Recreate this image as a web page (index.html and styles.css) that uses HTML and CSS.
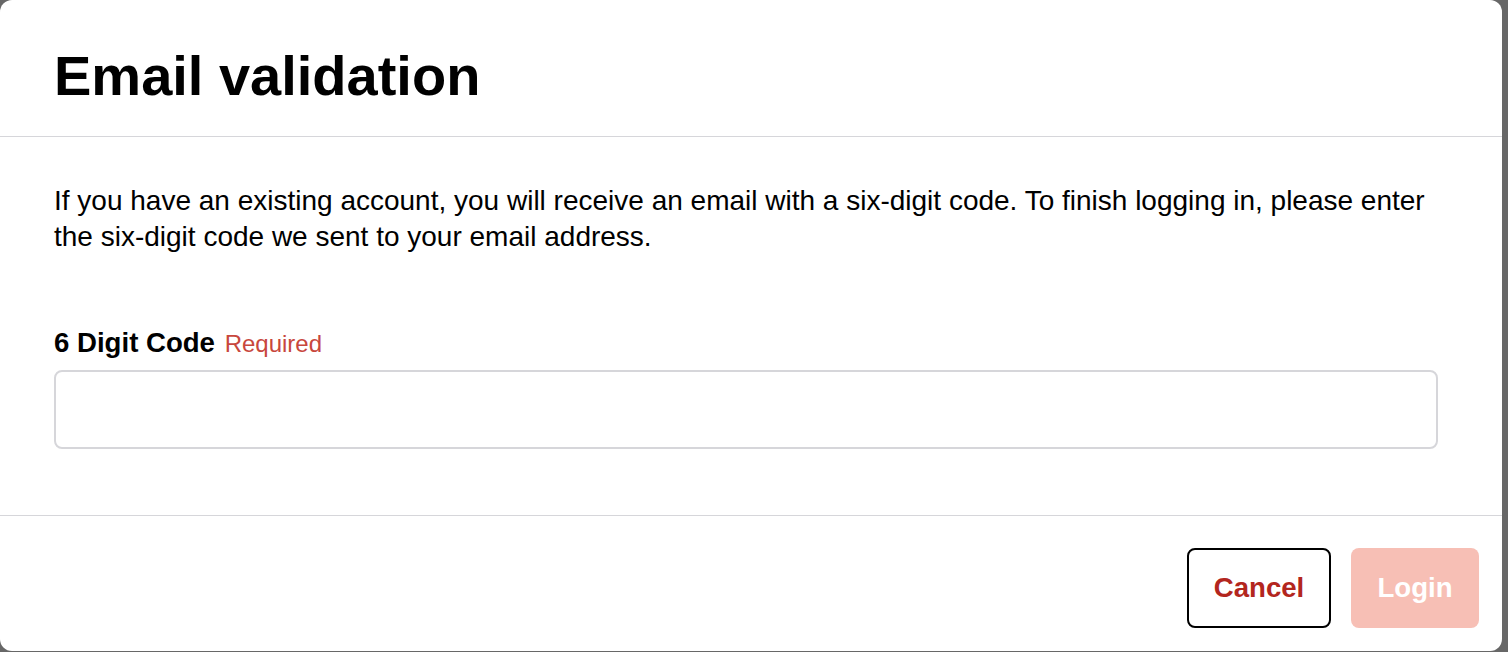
FILE: index.html
```html
<!DOCTYPE html>
<html lang="en">
<head>
<meta charset="utf-8">
<title>Email validation</title>
<link rel="stylesheet" href="styles.css">
</head>
<body>
<div class="modal">
  <header class="modal-header">
    <h1 class="modal-title">Email validation</h1>
  </header>
  <section class="modal-body">
    <p class="intro">If you have an existing account, you will receive an email with a six-digit code. To finish logging in, please enter the six-digit code we sent to your email address.</p>
    <div class="field">
      <label class="field-label" for="code">6 Digit Code <span class="required">Required</span></label>
      <input class="field-input" id="code" type="text">
    </div>
  </section>
  <footer class="modal-footer">
    <button class="btn btn-cancel" type="button">Cancel</button>
    <button class="btn btn-login" type="button" disabled>Login</button>
  </footer>
</div>
</body>
</html>
```

FILE: styles.css
```css
html, body {
  margin: 0;
  padding: 0;
}
body {
  background: #676767;
  font-family: "Liberation Sans", Arial, Helvetica, sans-serif;
  color: #000;
  width: 1508px;
  height: 652px;
  overflow: hidden;
}
.modal {
  width: 1502px;
  height: 651px;
  background: #fff;
  border-radius: 12px;
  display: flex;
  flex-direction: column;
  box-sizing: border-box;
  overflow: hidden;
}
.modal-header {
  padding: 44px 64px 28px 54px;
  border-bottom: 1px solid #d6d6da;
}
.modal-title {
  margin: 0;
  font-size: 56px;
  line-height: 64px;
  font-weight: 700;
}
.modal-body {
  padding: 46px 64px 0 54px;
  flex: 1;
  border-bottom: 1px solid #d6d6da;
}
.intro {
  margin: 0;
  font-size: 28px;
  line-height: 36px;
}
.field {
  margin-top: 72px;
  display: flex;
  flex-direction: column;
  gap: 10px;
}
.field-label {
  font-size: 27.6px;
  line-height: 32px;
  font-weight: 700;
}
.required {
  font-size: 24px;
  font-weight: 400;
  color: #c8473d;
  margin-left: 2px;
}
.field-input {
  box-sizing: border-box;
  width: 1384px;
  height: 79px;
  border: 2px solid #d6d6da;
  border-radius: 8px;
  background: #fff;
  font: inherit;
  font-size: 24px;
  padding: 0 16px;
  outline: none;
}
.modal-footer {
  height: 135px;
  box-sizing: border-box;
  padding: 32px 23px 0 0;
  display: flex;
  justify-content: flex-end;
  align-items: flex-start;
  gap: 20px;
}
.btn {
  box-sizing: border-box;
  height: 80px;
  border-radius: 8px;
  font-family: "Liberation Sans", Arial, Helvetica, sans-serif;
  font-size: 27.6px;
  font-weight: 700;
  padding: 0;
}
.btn-cancel {
  width: 144px;
  background: #fff;
  border: 2px solid #000;
  color: #b3261e;
}
.btn-login {
  width: 128px;
  background: #f7bfb5;
  border: none;
  color: #fff;
}
```
